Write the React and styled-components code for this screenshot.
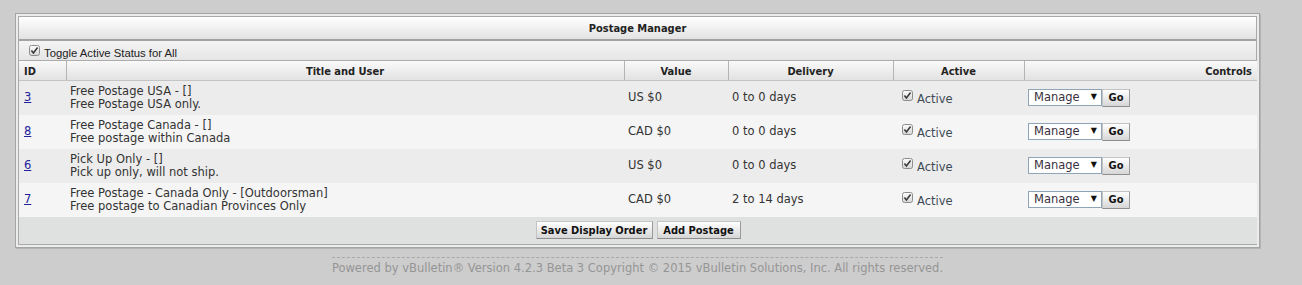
import React from "react";
import styled, { createGlobalStyle } from "styled-components";

const postages = [
  { id: 3, title: "Free Postage USA - []", note: "Free Postage USA only.", value: "US $0", delivery: "0 to 0 days" },
  { id: 8, title: "Free Postage Canada - []", note: "Free postage within Canada", value: "CAD $0", delivery: "0 to 0 days" },
  { id: 6, title: "Pick Up Only - []", note: "Pick up only, will not ship.", value: "US $0", delivery: "0 to 0 days" },
  { id: 7, title: "Free Postage - Canada Only - [Outdoorsman]", note: "Free postage to Canadian Provinces Only", value: "CAD $0", delivery: "2 to 14 days" },
];

const columns = [
  { label: "ID", width: 47, align: "left" },
  { label: "Title and User", width: 558, align: "center" },
  { label: "Value", width: 104, align: "center" },
  { label: "Delivery", width: 165, align: "center" },
  { label: "Active", width: 131, align: "center" },
  { label: "Controls", width: 233, align: "right" },
];

const GlobalStyle = createGlobalStyle`
  html, body {
    margin: 0;
    background: #cdcdcd;
  }
  body {
    padding: 13px 0 0 15px;
    font-family: "DejaVu Sans", Verdana, sans-serif;
    font-size: 11.5px;
    color: #333;
  }
`;

// small grey checkbox, drawn so it matches the old XP-ish look
const CheckBox = () => (
  <CheckIcon width="11" height="11" viewBox="0 0 11 11">
    <defs>
      <linearGradient id="cbg" x1="0" y1="0" x2="0" y2="1">
        <stop offset="0" stopColor="#fdfdfd" />
        <stop offset="1" stopColor="#d6d6d6" />
      </linearGradient>
    </defs>
    <rect x="0.5" y="0.5" width="10" height="10" rx="2" fill="url(#cbg)" stroke="#8c8c8c" />
    <path d="M2.4 5.6 L4.4 7.9 L8.6 2.6" fill="none" stroke="#3a3a3a" strokeWidth="1.6" />
  </CheckIcon>
);

const App = () => {
  return (
    <>
      <GlobalStyle />
      <Frame>
        <Panel>
          <TitleBar>Postage Manager</TitleBar>
          <ToggleRow>
            <CheckBox />
            <span>Toggle Active Status for All</span>
          </ToggleRow>
          <Table>
            <colgroup>
              {columns.map((c) => (
                <col key={c.label} style={{ width: c.width }} />
              ))}
            </colgroup>
            <thead>
              <tr>
                {columns.map((c) => (
                  <HeadCell key={c.label} $align={c.align}>
                    {c.label}
                  </HeadCell>
                ))}
              </tr>
            </thead>
            <tbody>
              {postages.map((p, i) => (
                <Row key={p.id} $alt={i % 2 === 1}>
                  <IdCell>
                    <IdLink href="#">{p.id}</IdLink>
                  </IdCell>
                  <Cell>
                    <div>{p.title}</div>
                    <div>{p.note}</div>
                  </Cell>
                  <Cell>{p.value}</Cell>
                  <Cell>{p.delivery}</Cell>
                  <ActiveCell>
                    <ActiveLabel>
                      <CheckBox />
                      <span>Active</span>
                    </ActiveLabel>
                  </ActiveCell>
                  <Cell>
                    <Controls>
                      <FakeSelect>
                        <span>Manage</span>
                        <Arrow>▼</Arrow>
                      </FakeSelect>
                      <Button $width={28}>Go</Button>
                    </Controls>
                  </Cell>
                </Row>
              ))}
            </tbody>
            <tfoot>
              <tr>
                <FootCell colSpan={6}>
                  <Button $width={117}>Save Display Order</Button>
                  <Button $width={84}>Add Postage</Button>
                </FootCell>
              </tr>
            </tfoot>
          </Table>
        </Panel>
      </Frame>
      <Copyright>
        <span>
          Powered by vBulletin® Version 4.2.3 Beta 3 Copyright © 2015 vBulletin Solutions, Inc. All rights reserved.
        </span>
      </Copyright>
    </>
  );
};

const Frame = styled.div`
  box-sizing: border-box;
  width: 1245px;
  border: 1px solid #a4a4a4;
  background: #ececec;
  padding: 2px;
  box-shadow: 1px 1px 0 #b4b4b4;
`;

const Panel = styled.div`
  border: 1px solid #a9a9a9;
  background: #f0f0f0;
`;

const TitleBar = styled.div`
  height: 22px;
  line-height: 23px;
  text-align: center;
  font-family: "DejaVu Sans Condensed", "Liberation Sans", sans-serif;
  font-weight: bold;
  font-size: 11px;
  color: #222;
  background: linear-gradient(#ffffff, #e3e3e3);
  border-bottom: 2px solid #a2a2a2;
`;

const ToggleRow = styled.div`
  display: flex;
  align-items: flex-start;
  gap: 4px;
  height: 20px;
  box-sizing: border-box;
  padding: 4px 0 0 10px;
  background: linear-gradient(#f4f4f4, #e6e6e6);
  border-bottom: 1px solid #acacac;
  font-family: "Liberation Sans", Tahoma, sans-serif;
  font-size: 11.3px;
  color: #222;

  span {
    padding-top: 2px;
  }
`;

const CheckIcon = styled.svg`
  flex: none;
  display: block;
`;

const Table = styled.table`
  width: 100%;
  table-layout: fixed;
  border-collapse: collapse;
`;

const HeadCell = styled.th`
  height: 18px;
  padding: 1px 5px 0;
  text-align: ${(p) => p.$align};
  font-family: "DejaVu Sans Condensed", "Liberation Sans", sans-serif;
  font-weight: bold;
  font-size: 11px;
  color: #222;
  background: linear-gradient(#f9f9f9, #e2e2e2);
  border-left: 1px solid #fdfdfd;
  border-right: 1px solid #b4b4b4;
  border-bottom: 1px solid #c4c4c4;

  &:first-child {
    border-left: none;
  }
  &:last-child {
    border-right: none;
  }
`;

const Row = styled.tr`
  height: 34px;
  background: ${(p) => (p.$alt ? "#f5f5f5" : "#ececec")};
`;

const Cell = styled.td`
  padding: 0 4px;
  vertical-align: middle;
  line-height: 13px;
  color: #333;
  white-space: nowrap;
`;

const IdCell = styled(Cell)`
  padding-left: 5px;
`;

const IdLink = styled.a`
  color: #22229c;
  text-decoration: underline;
`;

const ActiveCell = styled(Cell)`
  padding-left: 9px;
`;

const ActiveLabel = styled.label`
  display: flex;
  align-items: flex-start;
  gap: 4px;
  color: #3c4a55;

  span {
    padding-top: 3px;
  }
`;

const Controls = styled.div`
  display: flex;
  align-items: center;
`;

const FakeSelect = styled.div`
  box-sizing: border-box;
  width: 74px;
  height: 17px;
  display: flex;
  align-items: center;
  justify-content: space-between;
  padding: 0 4px 0 5px;
  background: #fff;
  border: 1px solid #8fa4b6;
  color: #3a3040;
  font-size: 11.5px;
`;

const Arrow = styled.span`
  font-size: 8px;
  color: #111;
  margin-top: -2px;
`;

const Button = styled.button`
  box-sizing: border-box;
  width: ${(p) => p.$width}px;
  height: 18px;
  margin: 0;
  padding: 0;
  font-family: "DejaVu Sans Condensed", "Liberation Sans", sans-serif;
  font-weight: bold;
  font-size: 11px;
  color: #111;
  background: linear-gradient(#ffffff, #d6d6d6);
  border: 1px solid #c4c4c4;
  border-right-color: #9a9a9a;
  border-bottom-color: #8e8e8e;
  border-radius: 0;
`;

const FootCell = styled.td`
  height: 27px;
  padding: 0;
  text-align: center;
  background: #dfe0e0;
  font-size: 0;

  ${Button} + ${Button} {
    margin-left: 4px;
  }
`;

const Copyright = styled.div`
  width: 1245px;
  margin-top: 9px;
  text-align: center;

  span {
    display: inline-block;
    border-top: 1px dashed #a9a9a9;
    padding-top: 3px;
    font-family: "DejaVu Sans", Verdana, sans-serif;
    font-size: 11.5px;
    color: #959595;
  }
`;

export default App;
